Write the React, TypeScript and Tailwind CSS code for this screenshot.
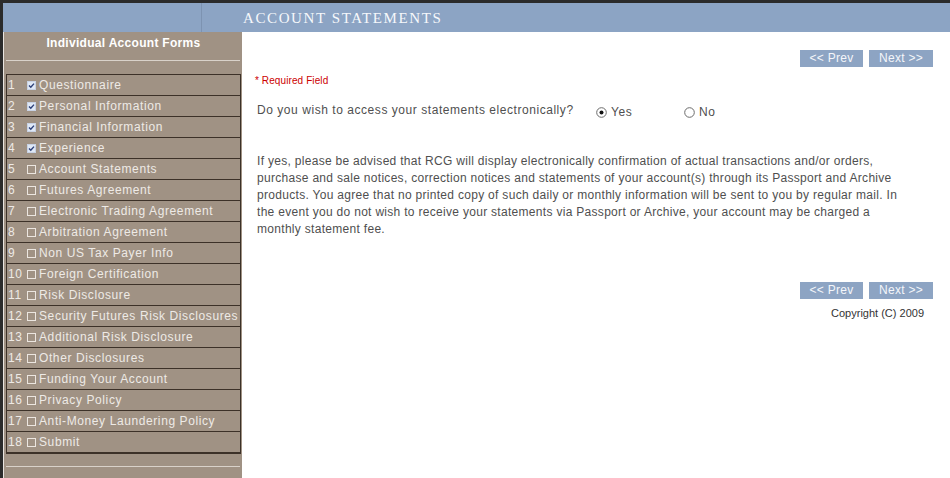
const steps = [
  { n: 1, title: 'Questionnaire', done: true },
  { n: 2, title: 'Personal Information', done: true },
  { n: 3, title: 'Financial Information', done: true },
  { n: 4, title: 'Experience', done: true },
  { n: 5, title: 'Account Statements', done: false },
  { n: 6, title: 'Futures Agreement', done: false },
  { n: 7, title: 'Electronic Trading Agreement', done: false },
  { n: 8, title: 'Arbitration Agreement', done: false },
  { n: 9, title: 'Non US Tax Payer Info', done: false },
  { n: 10, title: 'Foreign Certification', done: false },
  { n: 11, title: 'Risk Disclosure', done: false },
  { n: 12, title: 'Security Futures Risk Disclosures', done: false },
  { n: 13, title: 'Additional Risk Disclosure', done: false },
  { n: 14, title: 'Other Disclosures', done: false },
  { n: 15, title: 'Funding Your Account', done: false },
  { n: 16, title: 'Privacy Policy', done: false },
  { n: 17, title: 'Anti-Money Laundering Policy', done: false },
  { n: 18, title: 'Submit', done: false },
];

const disclaimer = [
  'If yes, please be advised that RCG will display electronically confirmation of actual transactions and/or orders,',
  'purchase and sale notices, correction notices and statements of your account(s) through its Passport and Archive',
  'products. You agree that no printed copy of such daily or monthly information will be sent to you by regular mail. In',
  'the event you do not wish to receive your statements via Passport or Archive, your account may be charged a',
  'monthly statement fee.',
];

function CheckIcon({ checked }: { checked: boolean }) {
  if (checked) {
    return (
      <svg width="9" height="9" viewBox="0 0 9 9" className="shrink-0">
        <rect x="0.5" y="0.5" width="8" height="8" fill="#dfe8f6" stroke="#c8d2e4" />
        <path d="M2 4.5 L3.8 6.3 L7 2.6" fill="none" stroke="#2c3f78" strokeWidth="1.4" />
      </svg>
    );
  }
  return (
    <svg width="9" height="9" viewBox="0 0 9 9" className="shrink-0">
      <rect x="0.5" y="0.5" width="8" height="8" fill="none" stroke="#ece6e0" />
    </svg>
  );
}

function NavButtons() {
  return (
    <div className="flex justify-end gap-[6px] pr-[17px]">
      <button className="w-[63px] h-[17px] bg-[#8da4c3] text-[#f4f6fa] text-[12px] leading-[17px] tracking-[0.3px]">
        &lt;&lt; Prev
      </button>
      <button className="w-[64px] h-[17px] bg-[#8da4c3] text-[#f4f6fa] text-[12px] leading-[17px] tracking-[0.3px]">
        Next &gt;&gt;
      </button>
    </div>
  );
}

function Radio({ checked }: { checked: boolean }) {
  return (
    <svg width="11" height="11" viewBox="0 0 11 11" className="shrink-0">
      <circle cx="5.5" cy="5.5" r="4.8" fill="#fff" stroke="#6a6a6a" />
      {checked && <circle cx="5.5" cy="5.5" r="2" fill="#111" />}
    </svg>
  );
}

export default function App() {
  return (
    <div className="w-[950px] h-[478px] overflow-hidden bg-[#2b2b2b] pt-[3px] pl-[3px] font-['Liberation_Sans',Arial,sans-serif]">
      <div className="flex h-[29px] bg-[#8ca4c4]">
        <div className="w-[199px] border-r border-[#7d93b1]" />
        <div className="pl-[41px] text-[#f6f8fb] text-[15px] leading-[30px] tracking-[1.6px] font-['Liberation_Serif','Times_New_Roman',serif]">
          ACCOUNT STATEMENTS
        </div>
      </div>
      <div className="flex h-[446px] bg-white">
        <div className="w-[239px] bg-[#a09284] border-l border-[#e8e4e0] pl-[2px] pr-[1px]">
          <div className="h-[28px] leading-[23px] text-center text-white font-bold text-[12px] tracking-[0.3px]">
            Individual Account Forms
          </div>
          <div className="h-px bg-[#d9d2ca] mr-[1px]" />
          <div className="h-[13px]" />
          <div className="border-b-2 border-[#3c3128]">
            {steps.map((s) => (
              <div
                key={s.n}
                className="flex items-center h-[21px] border-t border-x border-[#3c3128] text-[12px] text-[#eeeae6] tracking-[0.6px] whitespace-nowrap"
              >
                <span className="w-[20px] pl-[1px]">{s.n}</span>
                <span className="mr-[3px]">
                  <CheckIcon checked={s.done} />
                </span>
                <span>{s.title}</span>
              </div>
            ))}
          </div>
          <div className="h-[12px]" />
          <div className="h-px bg-[#d9d2ca] mr-[1px]" />
        </div>
        <div className="flex-1 pt-[18px] text-[#4f4f4f]">
          <NavButtons />
          <div className="pl-[13px] pt-[6px] text-[10px] text-[#cc0000] tracking-[0.1px]">* Required Field</div>
          <div className="flex items-center pl-[15px] pt-[10px] text-[12px] tracking-[0.55px]">
            <span className="w-[339px]">Do you wish to access your statements electronically?</span>
            <span className="flex items-center gap-[4px] w-[88px] pt-[5px]">
              <Radio checked />
              <span>Yes</span>
            </span>
            <span className="flex items-center gap-[4px] pt-[5px]">
              <Radio checked={false} />
              <span>No</span>
            </span>
          </div>
          <p className="pl-[15px] pt-[32px] text-[12px] leading-[17px] tracking-[0.3px] whitespace-nowrap">
            {disclaimer.map((line) => (
              <span key={line} className="block">
                {line}
              </span>
            ))}
          </p>
          <div className="pt-[44px]">
            <NavButtons />
          </div>
          <div className="text-right pr-[26px] pt-[6px] text-[11px] text-[#333]">Copyright (C) 2009</div>
        </div>
      </div>
    </div>
  );
}
